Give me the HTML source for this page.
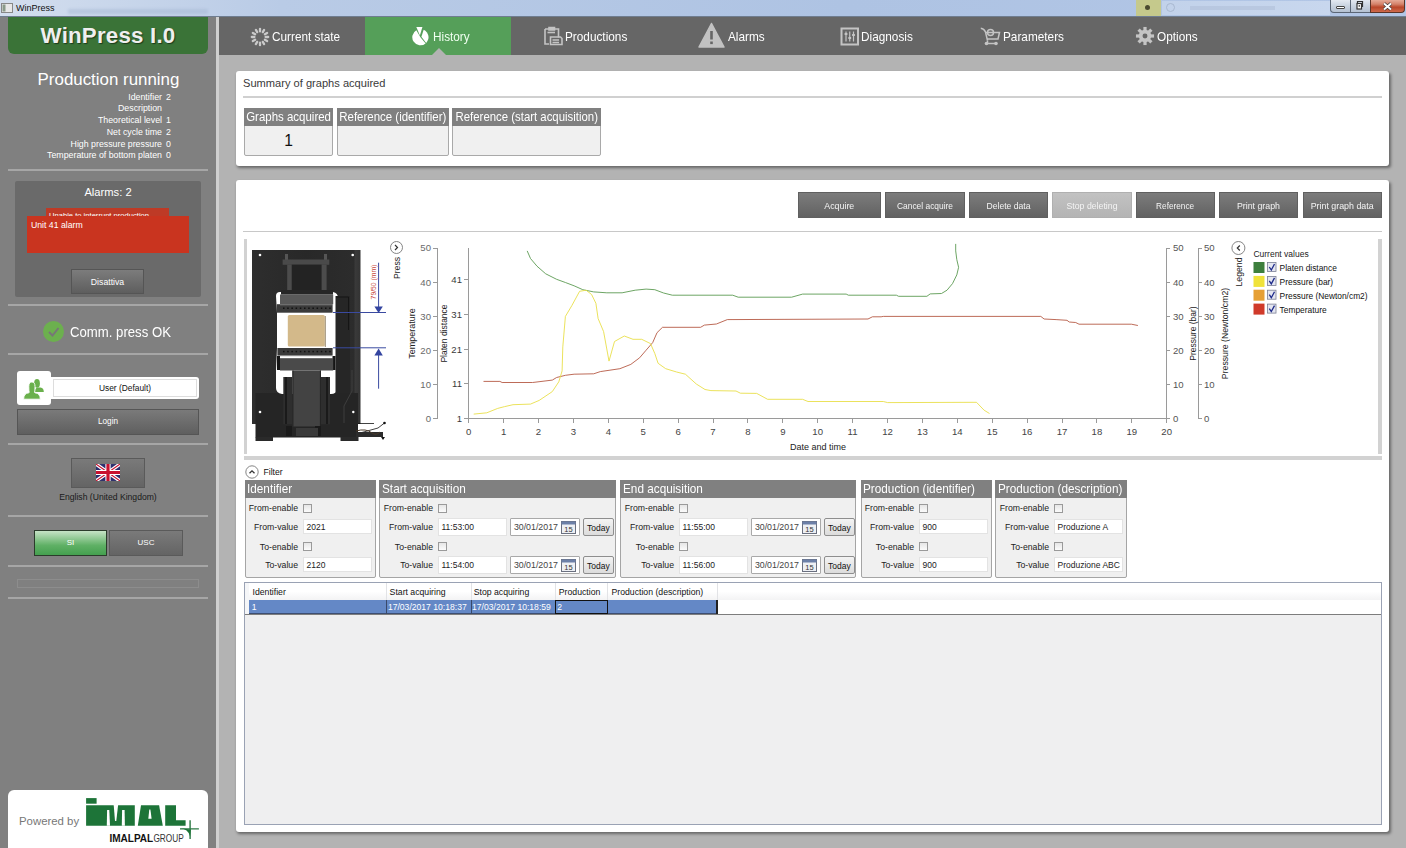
<!DOCTYPE html>
<html><head><meta charset="utf-8">
<style>
*{box-sizing:border-box;margin:0;padding:0}
html,body{width:1406px;height:848px;overflow:hidden;font-family:"Liberation Sans",sans-serif;background:#b3b3b3;position:relative}
.a{position:absolute}
#title{left:0;top:0;width:1406px;height:17px;background:linear-gradient(90deg,#d3deee,#b9cbe6 20%,#aec3e3 60%,#b2c6e6);border-bottom:1px solid #6f7d90}
#side{left:0;top:17px;width:216px;height:831px;background:#808080}
#sep{left:216px;top:17px;width:3px;height:831px;background:#cfcfcf}
#nav{left:219px;top:17px;width:1187px;height:38px;background:#666}
.tab{top:17px;height:38px;color:#fff;font-size:13px;line-height:38px}
.panel{background:#fff;border-radius:3px;box-shadow:1.5px 2px 3px rgba(0,0,0,.42)}
.hr{height:2px;background:#d0d0d0}
.sb{background:#f0f0f0;border:1px solid #a9a9a9;border-radius:2px}
.sbh{background:#808080;color:#fff;font-size:12px;line-height:17px;white-space:nowrap;overflow:hidden}
.btn{background:linear-gradient(#6f6f6f,#595959);color:#fff;font-size:10px;text-align:center;line-height:25px;border:1px solid #4d4d4d}
.grp{background:#f0f0f0;border:1px solid #a5a5a5;border-radius:2px}
.gh{background:#808080;color:#fff;font-size:12.5px;line-height:17px;padding-left:2px;white-space:nowrap}
.lbl{font-size:10px;color:#222;text-align:right;white-space:nowrap}
.inp{background:#fff;border:1px solid #e3e3e3;font-size:10px;color:#222;padding-left:3px;line-height:16px;white-space:nowrap;overflow:hidden}
.cb{width:10px;height:10px;border:1px solid #9a9a9a;background:linear-gradient(#e6e6e6,#fbfbfb)}
.today{background:linear-gradient(#f4f4f4,#dcdcdc);border:1px solid #8e8e8e;border-radius:2px;font-size:10px;color:#111;text-align:center;line-height:16px;padding-top:1.5px}
.tx{font-size:10px;color:#fff;white-space:nowrap}
.sl{height:2px;background:#a6a6a6}
</style></head><body>
<div id="title" class="a"></div>
<div id="side" class="a"></div>

<!-- SIDEBAR -->
<div class="a" style="left:8px;top:17px;width:200px;height:37px;background:#3a7337;border-radius:0 0 6px 6px"></div>
<div class="a" style="left:0;top:21px;width:216px;text-align:center;font-size:22.3px;font-weight:bold;color:#efefef;line-height:30px;text-shadow:1px 1px 1px #1d3a1c;letter-spacing:0.2px">WinPress I.0</div>
<div class="a" style="left:0;top:70px;width:216px;padding-left:1px;text-align:center;font-size:16.9px;color:#fff;line-height:20px">Production running</div>
<div class="a" style="left:0;top:91.5px;width:162px;text-align:right;font-size:8.8px;color:#fff;line-height:11.75px">Identifier<br>Description<br>Theoretical level<br>Net cycle time<br>High pressure pressure<br>Temperature of bottom platen</div>
<div class="a" style="left:166px;top:91.5px;width:20px;font-size:8.8px;color:#fff;line-height:11.75px">2<br>&nbsp;<br>1<br>2<br>0<br>0</div>
<div class="a sl" style="left:8px;top:169px;width:200px"></div>
<div class="a" style="left:15px;top:181px;width:186px;height:116px;background:#6a6a6a;border-radius:2px"></div>
<div class="a" style="left:15px;top:185px;width:186px;text-align:center;font-size:11.2px;color:#fff;line-height:14px">Alarms: 2</div>
<div class="a" style="left:46px;top:208px;width:123px;height:20px;background:#be3a26;overflow:hidden"><div style="font-size:7.6px;color:#fff;padding:3px 0 0 3px;white-space:nowrap">Unable to interrupt production</div></div>
<div class="a" style="left:27px;top:216px;width:162px;height:37px;background:#c9341f"></div>
<div class="a" style="left:31px;top:220px;font-size:8.7px;color:#fff;line-height:11px">Unit 41 alarm</div>
<div class="a btn" style="left:71px;top:269px;width:73px;height:25px;background:linear-gradient(#7c7c7c,#5e5e5e);border-color:#555;font-size:8.7px;line-height:25px">Disattiva</div>
<div class="a sl" style="left:8px;top:304px;width:200px"></div>
<div class="a" style="left:43px;top:321px;width:21px;height:21px;border-radius:50%;background:#6cb04e"></div>
<svg class="a" style="left:43px;top:321px" width="21" height="21"><path d="M6 11 L9.5 14.5 L15.5 7" stroke="#777" stroke-width="2" fill="none"/></svg>
<div class="a" style="left:69.5px;top:322.5px;font-size:14.4px;color:#fff;line-height:18px;white-space:nowrap;transform:scaleX(0.915);transform-origin:0 0">Comm. press OK</div>
<div class="a sl" style="left:8px;top:353px;width:200px"></div>
<div class="a" style="left:17px;top:371px;width:34px;height:34px;background:#fff;border-radius:3px"></div>
<div class="a" style="left:51px;top:377px;width:148px;height:22px;background:#fff;border-radius:0 3px 3px 0;"><div style="margin:2px 2px 2px 2px;height:18px;border:1px solid #ddd;text-align:center;font-size:8.4px;color:#111;line-height:16px">User (Default)</div></div>
<svg class="a" style="left:17px;top:371px" width="34" height="34"><g fill="#6ab04c"><ellipse cx="20" cy="12.4" rx="2.9" ry="4.3"/><path d="M17.5 21 Q18 16.8 21 16.6 L23.5 16.6 Q26.8 17 26.8 21 Z"/></g><g fill="#6ab04c" stroke="#fff" stroke-width="0.9"><path d="M6.6 28.2 Q6.8 22.3 11.8 21.8 L12.2 21.5 Q11.8 20 11.8 15.5 Q11.8 11 14.9 11 Q18 11 18 15.5 Q18 20 17.6 21.5 L18 21.8 Q23.2 22.3 23.3 28.2 Z"/></g></svg>
<div class="a btn" style="left:17px;top:409px;width:182px;height:26px;background:linear-gradient(#7a7a7a,#5f5f5f);border-color:#555;font-size:8.2px;line-height:24px">Login</div>
<div class="a sl" style="left:8px;top:443px;width:200px"></div>
<div class="a btn" style="left:71px;top:458px;width:74px;height:30px;background:linear-gradient(#7a7a7a,#646464);border-color:#5a5a5a"></div>
<svg class="a" style="left:96px;top:464px" width="24" height="17" viewBox="0 0 60 42"><rect width="60" height="42" fill="#2b2d6e"/><path d="M0 0L60 42M60 0L0 42" stroke="#fff" stroke-width="9"/><path d="M0 0L60 42M60 0L0 42" stroke="#c8102e" stroke-width="3"/><path d="M30 0V42M0 21H60" stroke="#fff" stroke-width="13"/><path d="M30 0V42M0 21H60" stroke="#c8102e" stroke-width="8"/></svg>
<div class="a" style="left:0;top:491px;width:216px;text-align:center;font-size:8.6px;color:#1a1a1a;line-height:12px">English (United Kingdom)</div>
<div class="a sl" style="left:8px;top:515px;width:200px"></div>
<div class="a" style="left:34px;top:530px;width:73px;height:26px;background:linear-gradient(#c6e3c6,#5fb065 60%,#44a04f);border:1px solid #2b3b2b;color:#fff;font-size:8px;text-align:center;line-height:24px">SI</div>
<div class="a btn" style="left:109px;top:530px;width:74px;height:26px;background:linear-gradient(#7a7a7a,#646464);border-color:#5a5a5a;font-size:8px;line-height:24px">USC</div>
<div class="a sl" style="left:8px;top:565px;width:200px"></div>
<div class="a" style="left:17px;top:579px;width:182px;height:9px;border:1px solid #8d8d8d"></div>
<div class="a sl" style="left:8px;top:597px;width:200px"></div>
<div class="a" style="left:8px;top:790px;width:200px;height:58px;background:#fff;border-radius:6px 6px 0 0"></div>
<div class="a" style="left:19px;top:814px;font-size:11.4px;color:#777;line-height:14px;white-space:nowrap">Powered by</div>
<svg class="a" style="left:84px;top:796px" width="120" height="50">
 <g fill="#1d7438">
  <rect x="2.1" y="2.1" width="10.5" height="5.6"/>
  <path d="M2.1 9.2H50.8V29.7H2.1Z"/>
  <path d="M57 9.2H75.1L78.8 29.8H53.8Z"/>
  <path d="M81.2 9.2H92V24.2H101.6V29.8H81.2Z"/>
 </g>
 <g fill="#fff">
  <path d="M22.8 29.8H26L25.3 13.9H23.1Z"/>
  <path d="M29.7 9.1H34.1L32.3 25H31Z"/>
  <path d="M37.8 29.8H40.9L40.6 13.9H38.1Z"/>
  <path d="M64.3 22.8H67.6L66.4 13.6H65.3Z"/>
 </g>
 <path d="M106.1 24.2V43M96 32.9H114.9" stroke="#2c7a44" stroke-width="1.4" fill="none"/>
 <path d="M96 32.3Q104 32.6 106.1 40.5L106.9 33.6Z" fill="#1d7438"/>
 <text x="25.4" y="46.2" font-family="Liberation Sans" font-size="10.6" font-weight="bold" fill="#111" textLength="43.8" lengthAdjust="spacingAndGlyphs">IMALPAL</text>
 <text x="69.4" y="46.2" font-family="Liberation Sans" font-size="10.6" fill="#333" textLength="30.4" lengthAdjust="spacingAndGlyphs">GROUP</text>
</svg>
<div id="sep" class="a"></div>
<div id="nav" class="a"></div>
<div class="a" style="left:365px;top:17px;width:146px;height:38px;background:#559f59"></div>

<!-- NAV -->
<div class="a" style="left:432px;top:48px;width:0;height:0;border-left:7px solid transparent;border-right:7px solid transparent;border-bottom:7px solid #b3b3b3"></div>
<svg class="a" style="left:250px;top:26.5px" width="20" height="20"><g stroke="#cacaca" stroke-width="2.3" stroke-linecap="round"><line x1="10.00" y1="4.40" x2="10.00" y2="1.80"/><line x1="12.80" y1="5.15" x2="14.10" y2="2.90"/><line x1="14.85" y1="7.20" x2="17.10" y2="5.90"/><line x1="15.60" y1="10.00" x2="18.20" y2="10.00"/><line x1="14.85" y1="12.80" x2="17.10" y2="14.10"/><line x1="12.80" y1="14.85" x2="14.10" y2="17.10"/><line x1="10.00" y1="15.60" x2="10.00" y2="18.20"/><line x1="7.20" y1="14.85" x2="5.90" y2="17.10"/><line x1="5.15" y1="12.80" x2="2.90" y2="14.10"/><line x1="4.40" y1="10.00" x2="1.80" y2="10.00"/><line x1="5.15" y1="7.20" x2="2.90" y2="5.90"/><line x1="7.20" y1="5.15" x2="5.90" y2="2.90"/></g></svg>
<div class="a" style="left:272px;top:29.4px;font-size:12.9px;transform:scaleX(0.915);transform-origin:0 0;color:#fff;line-height:16px;white-space:nowrap">Current state</div>
<svg class="a" style="left:410px;top:26px" width="22" height="21"><path d="M10.40 11.20 L6.35 4.19 A8.1 8.1 0 1 0 15.61 17.40 Z" fill="#fff"/><path d="M11.40 10.80 L13.69 3.80 A8.1 8.1 0 0 1 16.13 16.93 Z" fill="#fff"/><path d="M9.90 9.60 L6.34 1.1 L12.42 1.1 Z" fill="#fff"/></svg>
<div class="a" style="left:433px;top:29.4px;font-size:12.9px;transform:scaleX(0.915);transform-origin:0 0;color:#f0fff0;line-height:16px;white-space:nowrap">History</div>
<svg class="a" style="left:543px;top:26px" width="21" height="21"><g fill="none" stroke="#c4c4c4" stroke-width="1.6"><path d="M2 3H15.5V11.5M6 18H2V3"/><path d="M6 1.5H11.5V4H6Z" fill="#c4c4c4"/><path d="M4.5 6.5H12"/><path d="M7.5 11H17.5L19 12.5V18.5H7.5Z"/><path d="M9.5 14H16M9.5 16.5H16"/></g></svg>
<div class="a" style="left:565px;top:29.4px;font-size:12.9px;transform:scaleX(0.915);transform-origin:0 0;color:#fff;line-height:16px;white-space:nowrap">Productions</div>
<svg class="a" style="left:698px;top:22px" width="27" height="26"><path d="M13.5 1.5 L26 25 L1 25Z" fill="#c2c2c2" stroke="#c2c2c2" stroke-width="1.5" stroke-linejoin="round"/><rect x="12.2" y="9" width="2.6" height="8.5" fill="#666"/><rect x="12.2" y="19.5" width="2.6" height="2.6" fill="#666"/></svg>
<div class="a" style="left:728px;top:29.4px;font-size:12.9px;transform:scaleX(0.915);transform-origin:0 0;color:#fff;line-height:16px;white-space:nowrap">Alarms</div>
<svg class="a" style="left:840px;top:27px" width="20" height="19"><rect x="1.5" y="1.5" width="16.5" height="16" fill="none" stroke="#c4c4c4" stroke-width="2"/><g stroke="#c4c4c4" stroke-width="1.2"><path d="M6 4.5V14.5M9.75 4.5V14.5M13.5 4.5V14.5"/></g><g fill="#c4c4c4"><rect x="4.6" y="6" width="2.8" height="2"/><rect x="8.35" y="10" width="2.8" height="2"/><rect x="12.1" y="7" width="2.8" height="2"/></g></svg>
<div class="a" style="left:861px;top:29.4px;font-size:12.9px;transform:scaleX(0.915);transform-origin:0 0;color:#fff;line-height:16px;white-space:nowrap">Diagnosis</div>
<svg class="a" style="left:980px;top:27px" width="22" height="19"><g fill="none" stroke="#c4c4c4" stroke-width="1.5"><path d="M0.8 1.2 Q4 1.5 5.5 5 L7.5 13.5 M6 5.5H19.5L18 12H7.2"/><path d="M7.5 13.5 V16"/><path d="M6.5 16.5H16.5"/><circle cx="10.5" cy="5.5" r="3"/></g><g fill="#c4c4c4"><circle cx="6.5" cy="16.5" r="1.8"/><circle cx="16" cy="16.5" r="1.8"/></g></svg>
<div class="a" style="left:1003px;top:29.4px;font-size:12.9px;transform:scaleX(0.915);transform-origin:0 0;color:#fff;line-height:16px;white-space:nowrap">Parameters</div>
<svg class="a" style="left:1135px;top:26px" width="20" height="20" viewBox="-0.5 -0.5 21 21"><g fill="#c4c4c4"><rect x="8.3" y="0.5" width="3.4" height="5" transform="rotate(0 10 10)"/><rect x="8.3" y="0.5" width="3.4" height="5" transform="rotate(45 10 10)"/><rect x="8.3" y="0.5" width="3.4" height="5" transform="rotate(90 10 10)"/><rect x="8.3" y="0.5" width="3.4" height="5" transform="rotate(135 10 10)"/><rect x="8.3" y="0.5" width="3.4" height="5" transform="rotate(180 10 10)"/><rect x="8.3" y="0.5" width="3.4" height="5" transform="rotate(225 10 10)"/><rect x="8.3" y="0.5" width="3.4" height="5" transform="rotate(270 10 10)"/><rect x="8.3" y="0.5" width="3.4" height="5" transform="rotate(315 10 10)"/><circle cx="10" cy="10" r="6.5"/></g><circle cx="10" cy="10" r="2.6" fill="#666"/></svg>
<div class="a" style="left:1157px;top:29.4px;font-size:12.9px;transform:scaleX(0.915);transform-origin:0 0;color:#fff;line-height:16px;white-space:nowrap">Options</div>
<!-- title bar -->
<svg class="a" style="left:1px;top:2px" width="13" height="12"><rect x="0.5" y="1.5" width="11" height="9" fill="#e8e8e8" stroke="#888"/><rect x="1.5" y="2.5" width="3" height="7" fill="#8a9a8a"/></svg>
<div class="a" style="left:16px;top:2px;font-size:9px;color:#111;line-height:12px">WinPress</div><div class="a" style="left:68px;top:9px;width:140px;height:5px;background:#9fb2cf;opacity:.45;filter:blur(1.5px)"></div>
<div class="a" style="left:1136px;top:0;width:25px;height:16px;background:#c5c98c"></div><div class="a" style="left:1145px;top:5px;width:5px;height:5px;background:#4a4a30;border-radius:50%"></div>
<div class="a" style="left:1162px;top:1px;width:168px;height:14px;background:linear-gradient(90deg,#c2d2ea,#c8d7ee)"></div><div class="a" style="left:1166px;top:3px;width:9px;height:9px;border:1.5px solid #a8b8d0;border-radius:50%"></div><div class="a" style="left:1190px;top:6px;width:85px;height:4px;background:#b0c0d8;opacity:.6"></div>
<div class="a" style="left:1330px;top:0;width:21px;height:13px;background:linear-gradient(#e4e9f1,#c9d3e0 50%,#b4c1d2);border:1px solid #5b6676;border-top:none;border-radius:0 0 0 4px"></div>
<div class="a" style="left:1336px;top:5.5px;width:8.5px;height:3px;background:#fff;border:1px solid #444;border-radius:1px"></div>
<div class="a" style="left:1351px;top:0;width:19.5px;height:13px;background:linear-gradient(#e4e9f1,#c9d3e0 50%,#b4c1d2);border:1px solid #5b6676;border-top:none;border-left:none"></div>
<svg class="a" style="left:1354px;top:0" width="14" height="11"><path d="M3.5 3.5V1.5H8.5V6.5H7" fill="none" stroke="#333" stroke-width="1.2"/><rect x="3" y="3.5" width="4.5" height="5.5" fill="#fff" stroke="#333" stroke-width="1.2"/><rect x="4.6" y="5.2" width="1.4" height="1.4" fill="#333"/></svg>
<div class="a" style="left:1370px;top:0;width:35px;height:13px;background:linear-gradient(#e6ab98,#d4826a 35%,#b9472a 60%,#cf6a4c);border:1px solid #5a3428;border-top:none;border-radius:0 0 4px 0"></div>
<svg class="a" style="left:1382px;top:1.5px" width="11" height="9"><path d="M2 1.5L9 7.5M9 1.5L2 7.5" stroke="#333" stroke-width="3.2"/><path d="M2 1.5L9 7.5M9 1.5L2 7.5" stroke="#fff" stroke-width="2"/></svg>

<!-- panel 1 -->
<div class="a panel" style="left:236px;top:71px;width:1153px;height:95px"></div>

<div class="a" style="left:243px;top:76px;font-size:11.1px;color:#3a3a3a;line-height:14px;white-space:nowrap">Summary of graphs acquired</div>
<div class="a hr" style="left:243px;top:96px;width:1139px"></div>
<div class="a sb" style="left:244px;top:108px;width:89px;height:48px"></div>
<div class="a sbh" style="left:244px;top:108px;width:89px;height:18px;display:flex;justify-content:center;font-size:12.6px;line-height:18px"><span style="display:inline-block;transform:scaleX(0.911)">Graphs acquired</span></div>
<div class="a" style="left:244px;top:131px;width:89px;text-align:center;font-size:15.6px;color:#111;line-height:20px">1</div>
<div class="a sb" style="left:337px;top:108px;width:112px;height:48px"></div>
<div class="a sbh" style="left:337px;top:108px;width:112px;height:18px;display:flex;justify-content:center;font-size:12.6px;line-height:18px"><span style="display:inline-block;transform:scaleX(0.911)">Reference (identifier)</span></div>
<div class="a sb" style="left:452px;top:108px;width:149px;height:48px"></div>
<div class="a sbh" style="left:452px;top:108px;width:149px;height:18px;display:flex;justify-content:center;font-size:12.6px;line-height:18px"><span style="display:inline-block;transform:scaleX(0.904)">Reference (start acquisition)</span></div>
<!-- panel 2 -->
<div class="a panel" style="left:236px;top:180px;width:1153px;height:652px"></div>

<!-- buttons -->
<div class="a" style="left:798px;top:192px;width:83px;height:26px;background:linear-gradient(#7c7c7c,#626262);border:1px solid #606060;color:#f4f4f4;font-size:9.6px;text-align:center;line-height:25px;white-space:nowrap"><span style="display:inline-block;transform:scaleX(0.922)">Acquire</span></div>
<div class="a" style="left:885px;top:192px;width:80px;height:26px;background:linear-gradient(#7c7c7c,#626262);border:1px solid #606060;color:#f4f4f4;font-size:9.6px;text-align:center;line-height:25px;white-space:nowrap"><span style="display:inline-block;transform:scaleX(0.875)">Cancel acquire</span></div>
<div class="a" style="left:969px;top:192px;width:79px;height:26px;background:linear-gradient(#7c7c7c,#626262);border:1px solid #606060;color:#f4f4f4;font-size:9.6px;text-align:center;line-height:25px;white-space:nowrap"><span style="display:inline-block;transform:scaleX(0.897)">Delete data</span></div>
<div class="a" style="left:1052px;top:192px;width:80px;height:26px;background:linear-gradient(#c2c2c2,#b4b4b4);border:1px solid #b0b0b0;color:#f4f4f4;font-size:9.6px;text-align:center;line-height:25px;white-space:nowrap"><span style="display:inline-block;transform:scaleX(0.910)">Stop deleting</span></div>
<div class="a" style="left:1136px;top:192px;width:79px;height:26px;background:linear-gradient(#7c7c7c,#626262);border:1px solid #606060;color:#f4f4f4;font-size:9.6px;text-align:center;line-height:25px;white-space:nowrap"><span style="display:inline-block;transform:scaleX(0.859)">Reference</span></div>
<div class="a" style="left:1219px;top:192px;width:79px;height:26px;background:linear-gradient(#7c7c7c,#626262);border:1px solid #606060;color:#f4f4f4;font-size:9.6px;text-align:center;line-height:25px;white-space:nowrap"><span style="display:inline-block;transform:scaleX(0.916)">Print graph</span></div>
<div class="a" style="left:1303px;top:192px;width:79px;height:26px;background:linear-gradient(#7c7c7c,#626262);border:1px solid #606060;color:#f4f4f4;font-size:9.6px;text-align:center;line-height:25px;white-space:nowrap"><span style="display:inline-block;transform:scaleX(0.922)">Print graph data</span></div>
<div class="a" style="left:243px;top:231px;width:1139px;height:1px;background:#c8c8c8"></div>
<div class="a" style="left:244px;top:239px;width:3px;height:215px;background:#d2d2d2"></div>
<div class="a" style="left:1378px;top:239px;width:4px;height:215px;background:#d2d2d2"></div>
<div class="a" style="left:244px;top:456px;width:1138px;height:4px;background:#d2d2d2"></div>
<!-- press -->
<svg class="a" style="left:0;top:0" width="1406" height="848">
 <defs><linearGradient id="fr" x1="0" x2="1"><stop offset="0" stop-color="#2e2e2e"/><stop offset="0.5" stop-color="#282828"/><stop offset="0.94" stop-color="#2c2c2c"/><stop offset="0.95" stop-color="#3a3a3a"/><stop offset="1" stop-color="#333"/></linearGradient></defs>
 <rect x="252" y="250" width="108.5" height="174" fill="url(#fr)"/>
 <rect x="255.5" y="393" width="102.5" height="44.5" fill="#252525"/>
 <rect x="255.5" y="437" width="17.5" height="4" fill="#2a2a2a"/>
 <rect x="340.5" y="437" width="18" height="4" fill="#2a2a2a"/>
 <circle cx="260" cy="255" r="1.3" fill="#fff"/><circle cx="352.7" cy="255" r="1.3" fill="#fff"/>
 <circle cx="260" cy="412" r="1.3" fill="#fff"/><circle cx="353.3" cy="412" r="1.2" fill="#fff"/>
 <!-- top cylinder -->
 <rect x="285" y="254" width="3" height="6" fill="#555"/><rect x="324" y="254" width="3" height="6" fill="#555"/>
 <rect x="282.6" y="259.5" width="46.7" height="5.3" fill="#4a4a4a"/>
 <rect x="291.7" y="264.7" width="30" height="29" fill="#232323"/>
 <rect x="287.2" y="264.7" width="4.5" height="29" fill="#4c4c4c"/>
 <rect x="321.6" y="264.7" width="5" height="29" fill="#4c4c4c"/>
 <!-- white cutout -->
 <path d="M276 296 Q276 292 280 292 L333 292 Q338 293 338 298 L338 300 L337 313 L337 348 L338 370 L338 389 Q336 394 331 394 L282 394 Q276 393 276 388 L276 370 L277 348 L277 313 Z" fill="#fff"/>
 <rect x="281" y="290" width="52" height="4.6" fill="#262626"/>
 <!-- right vertical rod -->
 <rect x="335.5" y="296" width="14.5" height="97" fill="#262626"/>
 <path d="M336 297H348.5V330" stroke="#111" stroke-width="0.8" fill="none"/>
 <!-- upper platen -->
 <rect x="280" y="294.5" width="53.2" height="9.7" fill="#595959"/>
 <rect x="276.8" y="304.2" width="55.8" height="8.5" fill="#3a3a3a"/>
 <rect x="280" y="304.3" width="52" height="1" fill="#777"/>
 <!-- tan block -->
 <rect x="287.8" y="315" width="37" height="31.4" rx="1.5" fill="#d3b98a"/>
 <rect x="324.8" y="316" width="1" height="31" fill="#9a8a70"/>
 <!-- lower platen -->
 <rect x="277.4" y="348" width="55.2" height="7.6" fill="#3a3a3a"/>
 <rect x="280" y="355" width="52" height="1.2" fill="#888"/>
 <rect x="277" y="356" width="3" height="14" fill="#151515"/><rect x="332.5" y="356" width="3" height="14" fill="#151515"/>
 <rect x="280" y="358.2" width="53.2" height="12.3" fill="#4a4a4a"/>
 <rect x="283.0" y="307.5" width="1.5" height="1.5" fill="#111"/><rect x="283.0" y="350.8" width="1.5" height="1.5" fill="#111"/>
 <rect x="287.2" y="307.5" width="1.5" height="1.5" fill="#111"/><rect x="287.2" y="350.8" width="1.5" height="1.5" fill="#111"/>
 <rect x="291.4" y="307.5" width="1.5" height="1.5" fill="#111"/><rect x="291.4" y="350.8" width="1.5" height="1.5" fill="#111"/>
 <rect x="295.6" y="307.5" width="1.5" height="1.5" fill="#111"/><rect x="295.6" y="350.8" width="1.5" height="1.5" fill="#111"/>
 <rect x="299.8" y="307.5" width="1.5" height="1.5" fill="#111"/><rect x="299.8" y="350.8" width="1.5" height="1.5" fill="#111"/>
 <rect x="304.0" y="307.5" width="1.5" height="1.5" fill="#111"/><rect x="304.0" y="350.8" width="1.5" height="1.5" fill="#111"/>
 <rect x="308.2" y="307.5" width="1.5" height="1.5" fill="#111"/><rect x="308.2" y="350.8" width="1.5" height="1.5" fill="#111"/>
 <rect x="312.4" y="307.5" width="1.5" height="1.5" fill="#111"/><rect x="312.4" y="350.8" width="1.5" height="1.5" fill="#111"/>
 <rect x="316.6" y="307.5" width="1.5" height="1.5" fill="#111"/><rect x="316.6" y="350.8" width="1.5" height="1.5" fill="#111"/>
 <rect x="320.8" y="307.5" width="1.5" height="1.5" fill="#111"/><rect x="320.8" y="350.8" width="1.5" height="1.5" fill="#111"/>
 <rect x="325.0" y="307.5" width="1.5" height="1.5" fill="#111"/><rect x="325.0" y="350.8" width="1.5" height="1.5" fill="#111"/>
 <rect x="329.2" y="307.5" width="1.5" height="1.5" fill="#111"/><rect x="329.2" y="350.8" width="1.5" height="1.5" fill="#111"/>

 <!-- lower cylinder -->
 <rect x="283.3" y="377" width="9" height="47.3" fill="#2e2e2e"/>
 <rect x="321" y="377" width="9" height="47.3" fill="#2e2e2e"/>
 <rect x="285" y="377" width="2" height="47" fill="#1a1a1a"/><rect x="326" y="377" width="2" height="47" fill="#1a1a1a"/>
 <rect x="292.4" y="370.5" width="28.5" height="56" fill="#434343"/>
 <rect x="292.4" y="370.5" width="1" height="56" fill="#222"/><rect x="319.9" y="370.5" width="1" height="56" fill="#222"/>
 <rect x="286" y="426" width="6" height="10" fill="#1a1a1a"/><rect x="315" y="426" width="6" height="10" fill="#1a1a1a"/>
 <rect x="296" y="428" width="22" height="8" fill="#3a3a3a"/>
 <path d="M352 370 L352 391 L344 406 L344 423" stroke="#444" stroke-width="0.8" fill="none"/>
 <!-- pedal -->
 <path d="M358 423.5H374M360 433 L378 428 L384.5 423" stroke="#111" stroke-width="0.8" fill="none"/>
 <circle cx="384.5" cy="423" r="1.3" fill="#111"/>
 <path d="M356 432 H383 V437 H356 Z" fill="#2c2c2c"/>
 <path d="M356 431 Q366 428 372 433 Q376 436 380 432" stroke="#4a3a2a" stroke-width="1" fill="none"/>
 <path d="M381 437 L383 440 L385 437" fill="#111"/>
 <!-- dimension -->
 <g stroke="#3a4aa0" stroke-width="1" fill="none">
  <path d="M378.6 262.7V307"/><path d="M333 312.5H386"/><path d="M333 347.8H386"/><path d="M378.6 355V388.7"/>
 </g>
 <path d="M374.4 306.5H382.8L378.6 313Z" fill="#3344a0"/>
 <path d="M374.4 355.5H382.8L378.6 348.5Z" fill="#3344a0"/>
 <text transform="translate(375.5 282) rotate(-90)" text-anchor="middle" font-family="Liberation Sans" font-size="6.8" fill="#c8463a">79/50 (mm)</text>
</svg>
<!-- chart -->
<svg class="a" style="left:0;top:0" width="1406" height="848" font-family="Liberation Sans">
<g stroke="#9a9a9a" stroke-width="1" fill="none" shape-rendering="crispEdges"><path d="M437.5 248V419"/><path d="M433 248.0H437.5"/><path d="M433 282.1H437.5"/><path d="M433 316.3H437.5"/><path d="M433 350.4H437.5"/><path d="M433 384.6H437.5"/><path d="M433 418.7H437.5"/><path d="M468.5 248V419"/><path d="M464 279.7H468.5"/><path d="M464 314.4H468.5"/><path d="M464 349.1H468.5"/><path d="M464 383.8H468.5"/><path d="M464 418.5H468.5"/><path d="M468.5 418.5H1167"/><path d="M468.7 418.5V423"/><path d="M503.6 418.5V423"/><path d="M538.5 418.5V423"/><path d="M573.4 418.5V423"/><path d="M608.3 418.5V423"/><path d="M643.2 418.5V423"/><path d="M678.1 418.5V423"/><path d="M713.0 418.5V423"/><path d="M747.9 418.5V423"/><path d="M782.8 418.5V423"/><path d="M817.7 418.5V423"/><path d="M852.6 418.5V423"/><path d="M887.5 418.5V423"/><path d="M922.4 418.5V423"/><path d="M957.3 418.5V423"/><path d="M992.2 418.5V423"/><path d="M1027.1 418.5V423"/><path d="M1062.0 418.5V423"/><path d="M1096.9 418.5V423"/><path d="M1131.8 418.5V423"/><path d="M1166.7 418.5V423"/><path d="M1166.5 248V419"/><path d="M1198.5 248V419"/><path d="M1166.5 248.0H1170"/><path d="M1198.5 248.0H1202"/><path d="M1166.5 282.1H1170"/><path d="M1198.5 282.1H1202"/><path d="M1166.5 316.3H1170"/><path d="M1198.5 316.3H1202"/><path d="M1166.5 350.4H1170"/><path d="M1198.5 350.4H1202"/><path d="M1166.5 384.6H1170"/><path d="M1198.5 384.6H1202"/><path d="M1166.5 418.7H1170"/><path d="M1198.5 418.7H1202"/></g>
<g font-size="9.6" fill="#555"><text x="431" y="251.4" text-anchor="end" fill="#6a6a6a">50</text><text x="1173" y="251.4">50</text><text x="1204" y="251.4">50</text><text x="431" y="285.5" text-anchor="end" fill="#6a6a6a">40</text><text x="1173" y="285.5">40</text><text x="1204" y="285.5">40</text><text x="431" y="319.7" text-anchor="end" fill="#6a6a6a">30</text><text x="1173" y="319.7">30</text><text x="1204" y="319.7">30</text><text x="431" y="353.8" text-anchor="end" fill="#6a6a6a">20</text><text x="1173" y="353.8">20</text><text x="1204" y="353.8">20</text><text x="431" y="388.0" text-anchor="end" fill="#6a6a6a">10</text><text x="1173" y="388.0">10</text><text x="1204" y="388.0">10</text><text x="431" y="422.1" text-anchor="end" fill="#6a6a6a">0</text><text x="1173" y="422.1">0</text><text x="1204" y="422.1">0</text><text x="462" y="283.1" text-anchor="end" fill="#3a3a3a">41</text><text x="462" y="317.8" text-anchor="end" fill="#3a3a3a">31</text><text x="462" y="352.5" text-anchor="end" fill="#3a3a3a">21</text><text x="462" y="387.2" text-anchor="end" fill="#3a3a3a">11</text><text x="462" y="421.9" text-anchor="end" fill="#3a3a3a">1</text><text x="468.7" y="435" text-anchor="middle" fill="#444">0</text><text x="503.6" y="435" text-anchor="middle" fill="#444">1</text><text x="538.5" y="435" text-anchor="middle" fill="#444">2</text><text x="573.4" y="435" text-anchor="middle" fill="#444">3</text><text x="608.3" y="435" text-anchor="middle" fill="#444">4</text><text x="643.2" y="435" text-anchor="middle" fill="#444">5</text><text x="678.1" y="435" text-anchor="middle" fill="#444">6</text><text x="713.0" y="435" text-anchor="middle" fill="#444">7</text><text x="747.9" y="435" text-anchor="middle" fill="#444">8</text><text x="782.8" y="435" text-anchor="middle" fill="#444">9</text><text x="817.7" y="435" text-anchor="middle" fill="#444">10</text><text x="852.6" y="435" text-anchor="middle" fill="#444">11</text><text x="887.5" y="435" text-anchor="middle" fill="#444">12</text><text x="922.4" y="435" text-anchor="middle" fill="#444">13</text><text x="957.3" y="435" text-anchor="middle" fill="#444">14</text><text x="992.2" y="435" text-anchor="middle" fill="#444">15</text><text x="1027.1" y="435" text-anchor="middle" fill="#444">16</text><text x="1062.0" y="435" text-anchor="middle" fill="#444">17</text><text x="1096.9" y="435" text-anchor="middle" fill="#444">18</text><text x="1131.8" y="435" text-anchor="middle" fill="#444">19</text><text x="1166.7" y="435" text-anchor="middle" fill="#444">20</text></g>
<g font-size="9" fill="#222"><text x="818" y="449.6" text-anchor="middle">Date and time</text><text transform="translate(414.5 333.5) rotate(-90)" text-anchor="middle">Temperature</text><text transform="translate(447 333.5) rotate(-90)" text-anchor="middle" font-size="8.5">Platen distance</text><text transform="translate(1196 333.5) rotate(-90)" text-anchor="middle" font-size="8.5">Pressure (bar)</text><text transform="translate(1228 333.5) rotate(-90)" text-anchor="middle" font-size="8.7">Pressure (Newton/cm2)</text><text transform="translate(400 268) rotate(-90)" text-anchor="middle" font-size="8.7">Press</text><text transform="translate(1242 272) rotate(-90)" text-anchor="middle" font-size="8.7">Legend</text></g>
<circle cx="396.5" cy="247.5" r="6" fill="#fff" stroke="#777" stroke-width="0.9"/><path d="M395 245L397.5 247.5L395 250" stroke="#333" stroke-width="1.2" fill="none"/><circle cx="1238.4" cy="248" r="6.5" fill="#fff" stroke="#777" stroke-width="0.9"/><path d="M1239.8 245.5L1237.3 248L1239.8 250.5" stroke="#333" stroke-width="1.2" fill="none"/><polyline points="527.2,250.9 530.5,258.5 537.0,266.2 545.7,273.8 556.6,279.3 565.4,282.5 574.1,285.8 582.8,289.7 593.7,291.9 606.8,292.8 622.1,292.8 635.2,290.2 646.1,289.1 654.8,289.7 663.6,293.0 672.3,295.2 732.7,295.2 738.2,297.2 791.6,297.2 802.6,294.1 846.2,294.1 848.4,295.2 896.4,295.2 898.6,296.3 926.9,296.3 930.2,293.9 941.5,293.5 947.0,290.2 952.5,283.6 956.8,274.9 958.6,267.3 956.8,259.6 955.7,250.9 955.7,243.9" fill="none" stroke="#5c9b52" stroke-width="0.9"/><polyline points="483.5,381.4 499.9,381.4 502.1,382.5 532.6,382.5 552.3,380.1 556.6,377.5 565.4,375.3 574.1,374.2 593.7,373.8 600.3,371.6 619.9,368.7 630.8,364.4 639.6,357.8 646.1,350.2 652.7,342.6 657.0,332.7 662.5,327.3 700.6,327.3 704.4,325.1 716.4,324.0 727.3,319.6 868.0,319.0 872.4,316.8 881.1,316.8 883.3,316.4 1040.8,316.4 1044.1,319.0 1056.1,319.6 1067.0,320.3 1069.2,322.0 1075.7,322.5 1079.0,324.2 1131.4,324.2 1137.9,325.5" fill="none" stroke="#b55a45" stroke-width="0.9"/><polyline points="473.7,414.1 486.8,412.8 497.7,408.4 504.3,406.7 513.0,404.7 530.5,404.1 539.2,400.4 552.3,391.6 558.8,381.8 562.1,370.9 562.8,346.9 565.4,316.4 571.9,305.5 579.6,291.3 586.1,290.2 591.6,294.5 595.9,303.3 598.1,318.5 603.6,331.6 609.0,361.1 614.5,341.5 624.3,336.0 633.0,339.3 641.7,339.3 650.5,343.6 654.8,353.5 658.1,363.3 665.7,368.7 676.6,372.0 685.4,374.2 696.3,384.0 705.0,389.5 710.9,390.6 736.0,391.0 740.4,393.2 756.7,393.4 767.6,399.3 802.6,399.3 808.0,401.5 883.3,401.5 887.7,402.6 976.5,402.3 984.1,410.2 989.5,413.5" fill="none" stroke="#e9df4a" stroke-width="0.9"/><text x="1253.4" y="257" font-size="8.5" fill="#222">Current values</text><rect x="1253.5" y="262.0" width="11" height="11" fill="#3d7f3d"/><rect x="1267.5" y="262.5" width="8.5" height="9" fill="#e4e6f0" stroke="#7a7f94" stroke-width="0.8"/><path d="M1269.3 267.0L1271.3 270.0L1274.5 264.0" stroke="#1d2a8a" stroke-width="1.3" fill="none"/><text x="1279.6" y="271.0" font-size="8.4" fill="#111">Platen distance</text><rect x="1253.5" y="275.9" width="11" height="11" fill="#f0e23a"/><rect x="1267.5" y="276.4" width="8.5" height="9" fill="#e4e6f0" stroke="#7a7f94" stroke-width="0.8"/><path d="M1269.3 280.9L1271.3 283.9L1274.5 277.9" stroke="#1d2a8a" stroke-width="1.3" fill="none"/><text x="1279.6" y="284.9" font-size="8.4" fill="#111">Pressure (bar)</text><rect x="1253.5" y="289.7" width="11" height="11" fill="#e6a035"/><rect x="1267.5" y="290.2" width="8.5" height="9" fill="#e4e6f0" stroke="#7a7f94" stroke-width="0.8"/><path d="M1269.3 294.7L1271.3 297.7L1274.5 291.7" stroke="#1d2a8a" stroke-width="1.3" fill="none"/><text x="1279.6" y="298.7" font-size="8.4" fill="#111">Pressure (Newton/cm2)</text><rect x="1253.5" y="303.6" width="11" height="11" fill="#d03a2a"/><rect x="1267.5" y="304.1" width="8.5" height="9" fill="#e4e6f0" stroke="#7a7f94" stroke-width="0.8"/><path d="M1269.3 308.6L1271.3 311.6L1274.5 305.6" stroke="#1d2a8a" stroke-width="1.3" fill="none"/><text x="1279.6" y="312.6" font-size="8.4" fill="#111">Temperature</text></svg>
<!-- filter -->
<svg class="a" style="left:245px;top:465px" width="14" height="14"><circle cx="7" cy="7" r="6.2" fill="#fff" stroke="#777" stroke-width="0.9"/><path d="M4.5 8.3L7 5.8L9.5 8.3" stroke="#333" stroke-width="1.3" fill="none"/></svg>
<div class="a" style="left:263.5px;top:467px;font-size:8.6px;color:#111;line-height:11px">Filter</div>
<div class="a grp" style="left:244.5px;top:480px;width:131.2px;height:98px"></div>
<div class="a gh" style="left:244.5px;top:480px;width:131.2px;height:18px;font-size:12.6px;line-height:18px;padding-left:2.5px"><span style="display:inline-block;transform:scaleX(0.935);transform-origin:0 50%">Identifier</span></div>
<div class="a lbl" style="left:218px;top:502.4px;width:80px;font-size:8.7px;line-height:12px">From-enable</div>
<div class="a cb" style="left:302.5px;top:503.9px;width:9.5px;height:9px"></div>
<div class="a lbl" style="left:218px;top:521.0px;width:80px;font-size:8.7px;line-height:12px">From-value</div>
<div class="a inp" style="left:302.5px;top:519.0px;width:69.7px;height:15px;line-height:14px;font-size:8.5px;padding-left:3px">2021</div>
<div class="a lbl" style="left:218px;top:540.5px;width:80px;font-size:8.7px;line-height:12px">To-enable</div>
<div class="a cb" style="left:302.5px;top:542.0px;width:9.5px;height:9px"></div>
<div class="a lbl" style="left:218px;top:559.0px;width:80px;font-size:8.7px;line-height:12px">To-value</div>
<div class="a inp" style="left:302.5px;top:557.0px;width:69.7px;height:15px;line-height:14px;font-size:8.5px;padding-left:3px">2120</div>
<div class="a grp" style="left:379.4px;top:480px;width:237.10000000000002px;height:98px"></div>
<div class="a gh" style="left:379.4px;top:480px;width:237.10000000000002px;height:18px;font-size:12.6px;line-height:18px;padding-left:2.5px"><span style="display:inline-block;transform:scaleX(0.935);transform-origin:0 50%">Start acquisition</span></div>
<div class="a lbl" style="left:353px;top:502.4px;width:80px;font-size:8.7px;line-height:12px">From-enable</div>
<div class="a cb" style="left:437.5px;top:503.9px;width:9.5px;height:9px"></div>
<div class="a lbl" style="left:353px;top:521.0px;width:80px;font-size:8.7px;line-height:12px">From-value</div>
<div class="a inp" style="left:437.5px;top:518.0px;width:69.5px;height:17.5px;line-height:15.5px;font-size:8.5px;padding-left:3px;padding-top:1px">11:53:00</div>
<div class="a" style="left:509.9px;top:518.0px;width:70.2px;height:17.5px;background:#fff;border:1px solid #a9a9a9;border-radius:1px;font-size:8.8px;color:#444;line-height:15.5px;padding-left:3px;padding-top:1px">30/01/2017</div>
<svg class="a" style="left:561.4px;top:520.5px" width="15" height="13"><rect x="0.5" y="0.5" width="14" height="12" fill="#eef0f4" stroke="#6a7080"/><rect x="0.5" y="0.5" width="14" height="3" fill="#6c80a8"/><text x="7.5" y="11.3" font-family="Liberation Sans" font-size="7.5" fill="#333" text-anchor="middle">15</text></svg>
<div class="a today" style="left:582.8px;top:518.0px;width:31px;height:17.6px;font-size:8.5px;line-height:15.6px">Today</div>
<div class="a lbl" style="left:353px;top:540.5px;width:80px;font-size:8.7px;line-height:12px">To-enable</div>
<div class="a cb" style="left:437.5px;top:542.0px;width:9.5px;height:9px"></div>
<div class="a lbl" style="left:353px;top:559.0px;width:80px;font-size:8.7px;line-height:12px">To-value</div>
<div class="a inp" style="left:437.5px;top:556.0px;width:69.5px;height:17.5px;line-height:15.5px;font-size:8.5px;padding-left:3px;padding-top:1px">11:54:00</div>
<div class="a" style="left:509.9px;top:556.0px;width:70.2px;height:17.5px;background:#fff;border:1px solid #a9a9a9;border-radius:1px;font-size:8.8px;color:#444;line-height:15.5px;padding-left:3px;padding-top:1px">30/01/2017</div>
<svg class="a" style="left:561.4px;top:558.5px" width="15" height="13"><rect x="0.5" y="0.5" width="14" height="12" fill="#eef0f4" stroke="#6a7080"/><rect x="0.5" y="0.5" width="14" height="3" fill="#6c80a8"/><text x="7.5" y="11.3" font-family="Liberation Sans" font-size="7.5" fill="#333" text-anchor="middle">15</text></svg>
<div class="a today" style="left:582.8px;top:556.0px;width:31px;height:17.6px;font-size:8.5px;line-height:15.6px">Today</div>
<div class="a grp" style="left:620.3px;top:480px;width:236.10000000000002px;height:98px"></div>
<div class="a gh" style="left:620.3px;top:480px;width:236.10000000000002px;height:18px;font-size:12.6px;line-height:18px;padding-left:2.5px"><span style="display:inline-block;transform:scaleX(0.935);transform-origin:0 50%">End acquisition</span></div>
<div class="a lbl" style="left:594px;top:502.4px;width:80px;font-size:8.7px;line-height:12px">From-enable</div>
<div class="a cb" style="left:678.5px;top:503.9px;width:9.5px;height:9px"></div>
<div class="a lbl" style="left:594px;top:521.0px;width:80px;font-size:8.7px;line-height:12px">From-value</div>
<div class="a inp" style="left:678.5px;top:518.0px;width:69.5px;height:17.5px;line-height:15.5px;font-size:8.5px;padding-left:3px;padding-top:1px">11:55:00</div>
<div class="a" style="left:750.9px;top:518.0px;width:70.2px;height:17.5px;background:#fff;border:1px solid #a9a9a9;border-radius:1px;font-size:8.8px;color:#444;line-height:15.5px;padding-left:3px;padding-top:1px">30/01/2017</div>
<svg class="a" style="left:802.4px;top:520.5px" width="15" height="13"><rect x="0.5" y="0.5" width="14" height="12" fill="#eef0f4" stroke="#6a7080"/><rect x="0.5" y="0.5" width="14" height="3" fill="#6c80a8"/><text x="7.5" y="11.3" font-family="Liberation Sans" font-size="7.5" fill="#333" text-anchor="middle">15</text></svg>
<div class="a today" style="left:823.8px;top:518.0px;width:31px;height:17.6px;font-size:8.5px;line-height:15.6px">Today</div>
<div class="a lbl" style="left:594px;top:540.5px;width:80px;font-size:8.7px;line-height:12px">To-enable</div>
<div class="a cb" style="left:678.5px;top:542.0px;width:9.5px;height:9px"></div>
<div class="a lbl" style="left:594px;top:559.0px;width:80px;font-size:8.7px;line-height:12px">To-value</div>
<div class="a inp" style="left:678.5px;top:556.0px;width:69.5px;height:17.5px;line-height:15.5px;font-size:8.5px;padding-left:3px;padding-top:1px">11:56:00</div>
<div class="a" style="left:750.9px;top:556.0px;width:70.2px;height:17.5px;background:#fff;border:1px solid #a9a9a9;border-radius:1px;font-size:8.8px;color:#444;line-height:15.5px;padding-left:3px;padding-top:1px">30/01/2017</div>
<svg class="a" style="left:802.4px;top:558.5px" width="15" height="13"><rect x="0.5" y="0.5" width="14" height="12" fill="#eef0f4" stroke="#6a7080"/><rect x="0.5" y="0.5" width="14" height="3" fill="#6c80a8"/><text x="7.5" y="11.3" font-family="Liberation Sans" font-size="7.5" fill="#333" text-anchor="middle">15</text></svg>
<div class="a today" style="left:823.8px;top:556.0px;width:31px;height:17.6px;font-size:8.5px;line-height:15.6px">Today</div>
<div class="a grp" style="left:860.5px;top:480px;width:131.39999999999998px;height:98px"></div>
<div class="a gh" style="left:860.5px;top:480px;width:131.39999999999998px;height:18px;font-size:12.6px;line-height:18px;padding-left:2.5px"><span style="display:inline-block;transform:scaleX(0.935);transform-origin:0 50%">Production (identifier)</span></div>
<div class="a lbl" style="left:834px;top:502.4px;width:80px;font-size:8.7px;line-height:12px">From-enable</div>
<div class="a cb" style="left:918.5px;top:503.9px;width:9.5px;height:9px"></div>
<div class="a lbl" style="left:834px;top:521.0px;width:80px;font-size:8.7px;line-height:12px">From-value</div>
<div class="a inp" style="left:918.5px;top:519.0px;width:69.9px;height:15px;line-height:14px;font-size:8.5px;padding-left:3px">900</div>
<div class="a lbl" style="left:834px;top:540.5px;width:80px;font-size:8.7px;line-height:12px">To-enable</div>
<div class="a cb" style="left:918.5px;top:542.0px;width:9.5px;height:9px"></div>
<div class="a lbl" style="left:834px;top:559.0px;width:80px;font-size:8.7px;line-height:12px">To-value</div>
<div class="a inp" style="left:918.5px;top:557.0px;width:69.9px;height:15px;line-height:14px;font-size:8.5px;padding-left:3px">900</div>
<div class="a grp" style="left:995.2px;top:480px;width:131.39999999999986px;height:98px"></div>
<div class="a gh" style="left:995.2px;top:480px;width:131.39999999999986px;height:18px;font-size:12.6px;line-height:18px;padding-left:2.5px"><span style="display:inline-block;transform:scaleX(0.935);transform-origin:0 50%">Production (description)</span></div>
<div class="a lbl" style="left:969px;top:502.4px;width:80px;font-size:8.7px;line-height:12px">From-enable</div>
<div class="a cb" style="left:1053.5px;top:503.9px;width:9.5px;height:9px"></div>
<div class="a lbl" style="left:969px;top:521.0px;width:80px;font-size:8.7px;line-height:12px">From-value</div>
<div class="a inp" style="left:1053.5px;top:519.0px;width:69.6px;height:15px;line-height:14px;font-size:8.5px;padding-left:3px">Produzione A</div>
<div class="a lbl" style="left:969px;top:540.5px;width:80px;font-size:8.7px;line-height:12px">To-enable</div>
<div class="a cb" style="left:1053.5px;top:542.0px;width:9.5px;height:9px"></div>
<div class="a lbl" style="left:969px;top:559.0px;width:80px;font-size:8.7px;line-height:12px">To-value</div>
<div class="a inp" style="left:1053.5px;top:557.0px;width:69.6px;height:15px;line-height:14px;font-size:8.5px;padding-left:3px">Produzione ABC</div>
<!-- table -->
<div class="a" style="left:244px;top:582px;width:1138px;height:243px;background:#efeff0;border:1px solid #9aa2b4"></div>
<div class="a" style="left:245px;top:583px;width:1136px;height:32px;background:#fff;border-bottom:1px solid #7d7d7d"></div>
<div class="a" style="left:245px;top:583px;width:1136px;height:17px;background:linear-gradient(#fff,#fff 50%,#f3f3f4)"></div>
<div class="a" style="left:385.7px;top:583px;width:1px;height:17px;background:#e2e3e6"></div>
<div class="a" style="left:470.5px;top:583px;width:1px;height:17px;background:#e2e3e6"></div>
<div class="a" style="left:554.5px;top:583px;width:1px;height:17px;background:#e2e3e6"></div>
<div class="a" style="left:607.2px;top:583px;width:1px;height:17px;background:#e2e3e6"></div>
<div class="a" style="left:717.4px;top:583px;width:1px;height:17px;background:#e2e3e6"></div>
<div class="a" style="left:245px;top:583px;width:4px;height:31px;background:#f5f6f8"></div>
<div class="a" style="left:252.5px;top:586px;font-size:8.7px;color:#111;line-height:12px;white-space:nowrap">Identifier</div>
<div class="a" style="left:389.6px;top:586px;font-size:8.7px;color:#111;line-height:12px;white-space:nowrap">Start acquiring</div>
<div class="a" style="left:473.7px;top:586px;font-size:8.7px;color:#111;line-height:12px;white-space:nowrap">Stop acquiring</div>
<div class="a" style="left:558.8px;top:586px;font-size:8.7px;color:#111;line-height:12px;white-space:nowrap">Production</div>
<div class="a" style="left:611.5px;top:586px;font-size:8.7px;color:#111;line-height:12px;white-space:nowrap">Production (description)</div>
<div class="a" style="left:249px;top:600px;width:468.4px;height:14px;background:#6488c6;border-bottom:1px solid #3d4e72"></div>
<div class="a" style="left:385.7px;top:600px;width:1px;height:14px;background:#3a4a6a"></div>
<div class="a" style="left:470.5px;top:600px;width:1px;height:14px;background:#3a4a6a"></div>
<div class="a" style="left:554.5px;top:600px;width:53px;height:14px;border:1.5px solid #111"></div>
<div class="a" style="left:716.4px;top:600px;width:1.5px;height:14px;background:#222"></div>
<div class="a" style="left:251.7px;top:601px;font-size:8.6px;color:#fff;line-height:12px;white-space:nowrap">1</div>
<div class="a" style="left:387.9px;top:601px;font-size:8.6px;color:#fff;line-height:12px;white-space:nowrap">17/03/2017 10:18:37</div>
<div class="a" style="left:472px;top:601px;font-size:8.6px;color:#fff;line-height:12px;white-space:nowrap">17/03/2017 10:18:59</div>
<div class="a" style="left:557.3px;top:601px;font-size:8.6px;color:#fff;line-height:12px;white-space:nowrap">2</div>
</body></html>
